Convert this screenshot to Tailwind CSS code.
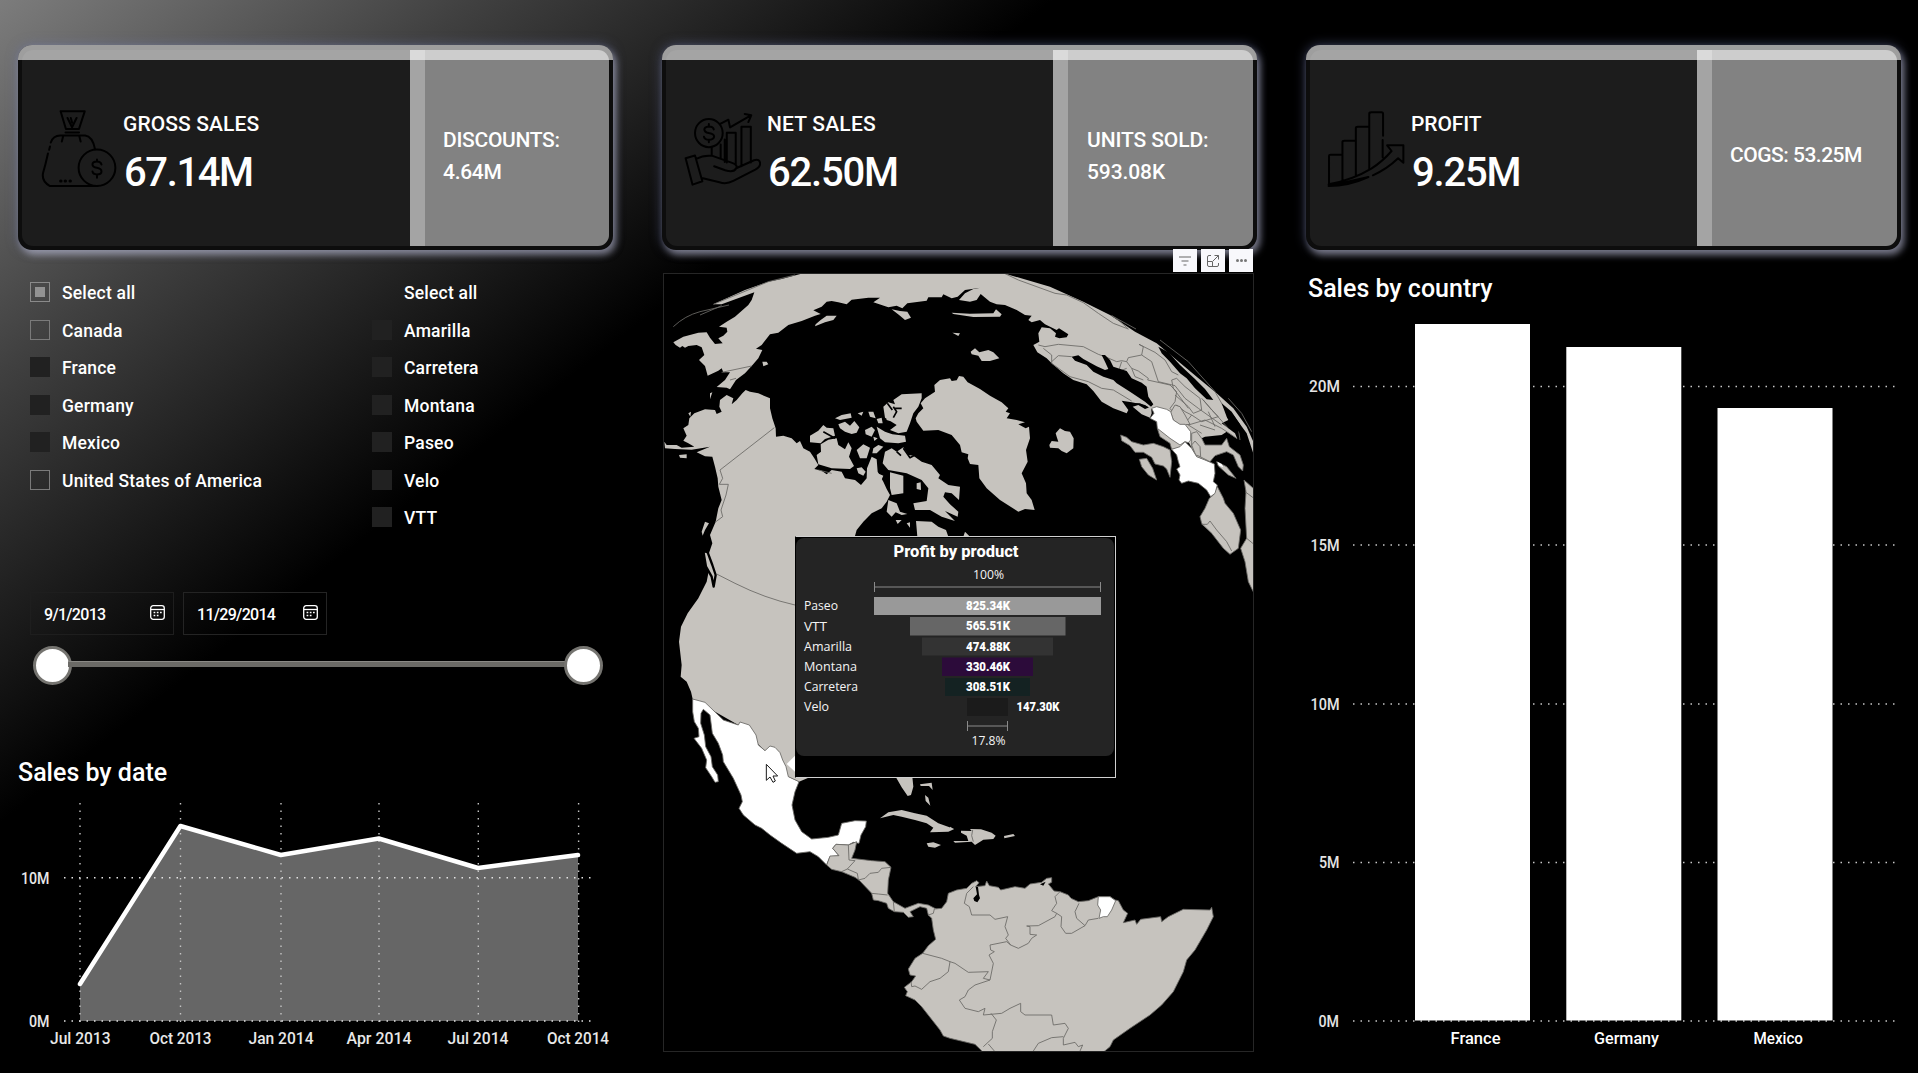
<!DOCTYPE html>
<html lang="en">
<head>
<meta charset="utf-8">
<title>Sales dashboard</title>
<script src="https://cdn.jsdelivr.net/npm/@tailwindcss/browser@4"></script>
</head>
<body class="bg-black">
<main class="w-[1918px] h-[1073px] overflow-hidden pt-[45px] pl-[18px] grid grid-cols-[595px_595px_595px] grid-rows-[205px_823px] gap-x-[49px] text-white font-['Roboto',sans-serif] bg-[linear-gradient(142deg,#7c7c7c_0%,#404040_14.5%,#000_32%)]">

  <!-- KPI cards -->
  <section class="relative rounded-[14px] overflow-visible bg-[#0d0d0d] pt-[5px] px-1 pb-1 shadow-[3px_5px_7px_rgba(205,205,225,0.5),0_0_12px_rgba(110,120,175,0.5)]">
    <div class="flex h-full rounded-[11px] overflow-hidden bg-[#1c1c1c]">
      <div class="flex w-[388px] pl-[19px]">
        <svg class="w-[76px] h-[78px] mt-[60px]" viewBox="100 240 186 235" preserveAspectRatio="none" fill="none" stroke="#000" stroke-width="2" stroke-linecap="round" stroke-linejoin="round">
          <g>
            <path vector-effect="non-scaling-stroke" d="M148 244H207L193 297H161ZM165 264L176 292L187 264M173 264L176 278M160 308H193M151 335L154 320M197 335L194 320M124 338Q130 317 147 317H208Q226 320 232 357M122 350L120 360M117 371Q111 405 105 430Q101 455 122 469H238"/>
            <ellipse vector-effect="non-scaling-stroke" cx="237" cy="414" rx="45" ry="55"/>
            <path vector-effect="non-scaling-stroke" d="M248 404Q246 395 237 395Q226 395 226 404Q226 412 237 414Q248 417 248 425Q248 434 237 434Q227 434 226 425M237 389V395M237 434V444"/>
            <path vector-effect="non-scaling-stroke" stroke-width="3" d="M148 454H149M159 454H160M171 454H172"/>
          </g>
        </svg>
        <div class="pt-[62px] pl-[6px]">
          <h2 class="text-[21px] leading-6 font-medium tracking-[0.1px] whitespace-nowrap">GROSS SALES</h2>
          <p class="mt-[13px] ml-px text-[40px] leading-[48px] font-medium tracking-[-1.4px]">67.14M</p>
        </div>
      </div>
      <div class="w-[15px] bg-[#a4a4a4]"></div>
      <div class="flex-1 flex items-center bg-[#828282] pl-[18px] pt-4">
        <p class="text-[21px] leading-8 font-medium tracking-[-0.3px]">DISCOUNTS:<br>4.64M</p>
      </div>
    </div>
    <div class="absolute inset-x-0 top-0 h-[15px] rounded-t-[14px] bg-white/60"></div>
  </section>

  <section class="relative rounded-[14px] bg-[#0d0d0d] pt-[5px] px-1 pb-1 shadow-[3px_5px_7px_rgba(205,205,225,0.5),0_0_12px_rgba(110,120,175,0.5)]">
    <div class="flex h-full rounded-[11px] overflow-hidden bg-[#1c1c1c]">
      <div class="flex w-[387px] pl-[18px]">
        <svg class="w-[77px] h-[75px] mt-[62px]" viewBox="107 246 189 224" preserveAspectRatio="none" fill="none" stroke="#000" stroke-width="2" stroke-linecap="round" stroke-linejoin="round">
          <ellipse vector-effect="non-scaling-stroke" cx="168" cy="309" rx="34" ry="42"/>
          <path vector-effect="non-scaling-stroke" d="M180 298Q179 289 168 289Q157 290 157 298Q157 306 168 309Q181 312 181 320Q179 329 168 329Q158 329 156 320M168 282V289M168 329V336M197 281L216 269L220 292L271 256M256 252L272 256L265 276M175 352V373M197 343V385M207 328V395M212 397V308H234V402M248 408V290H271V397M111 384L134 376L152 453L128 463ZM137 386Q155 374 177 377L225 398Q240 405 235 414Q230 428 208 420L181 408M235 414L279 390Q293 385 294 400Q294 410 282 418L228 452Q211 463 194 456Q170 448 151 443"/>
        </svg>
        <div class="pt-[62px] pl-[6px]">
          <h2 class="text-[21px] leading-6 font-medium tracking-[0.2px] whitespace-nowrap">NET SALES</h2>
          <p class="mt-[13px] ml-px text-[40px] leading-[48px] font-medium tracking-[-1.2px]">62.50M</p>
        </div>
      </div>
      <div class="w-[15px] bg-[#a4a4a4]"></div>
      <div class="flex-1 flex items-center bg-[#828282] pl-[19px] pt-4">
        <p class="text-[21px] leading-8 font-medium tracking-[-0.1px] whitespace-nowrap">UNITS SOLD:<br>593.08K</p>
      </div>
    </div>
    <div class="absolute inset-x-0 top-0 h-[15px] rounded-t-[14px] bg-white/60"></div>
  </section>

  <section class="relative rounded-[14px] bg-[#0d0d0d] pt-[5px] px-1 pb-1 shadow-[3px_5px_7px_rgba(205,205,225,0.5),0_0_12px_rgba(110,120,175,0.5)]">
    <div class="flex h-full rounded-[11px] overflow-hidden bg-[#1c1c1c]">
      <div class="flex w-[387px] pl-[17px]">
        <svg class="w-[78px] h-[77px] mt-[61px]" viewBox="117 243 192 231" preserveAspectRatio="none" fill="none" stroke="#000" stroke-width="2" stroke-linecap="round" stroke-linejoin="round">
          <path vector-effect="non-scaling-stroke" d="M122 461V377Q122 374 126 374H155M155 452V336Q155 332 160 332H188M188 438V294Q188 290 193 290H221M221 418V251Q221 247 226 247H251Q255 247 255 252V317M254 330V382M121 463Q180 450 226 416Q254 394 276 363L265 346H305V398L292 385Q265 417 230 436M219 441Q170 468 121 468Z"/>
        </svg>
        <div class="pt-[62px] pl-[6px]">
          <h2 class="text-[21px] leading-6 font-medium tracking-[-0.1px]">PROFIT</h2>
          <p class="mt-[13px] ml-px text-[40px] leading-[48px] font-medium tracking-[-1.2px]">9.25M</p>
        </div>
      </div>
      <div class="w-[15px] bg-[#a4a4a4]"></div>
      <div class="flex-1 flex items-center bg-[#828282] pl-[18px] pt-[13px]">
        <p class="text-[21px] leading-8 font-medium tracking-[-0.5px] whitespace-nowrap">COGS: 53.25M</p>
      </div>
    </div>
    <div class="absolute inset-x-0 top-0 h-[15px] rounded-t-[14px] bg-white/60"></div>
  </section>

  <!-- Filters and area chart -->
  <section class="pt-8">
    <div class="grid grid-cols-[342px_1fr] h-[310px] pl-3 text-[17.5px] leading-5 font-medium tracking-[0.2px]">
      <ul>
        <li class="flex gap-3 h-[37.5px]"><span class="size-5 border border-[#8a8a8a] flex items-center justify-center"><i class="size-[10px] bg-[#929292]"></i></span><span class="pt-px">Select all</span></li>
        <li class="flex gap-3 h-[37.5px]"><span class="size-5 border border-[#7a7a7a]"></span><span class="pt-px">Canada</span></li>
        <li class="flex gap-3 h-[37.5px]"><span class="size-5 bg-[#212121]"></span><span class="pt-px">France</span></li>
        <li class="flex gap-3 h-[37.5px]"><span class="size-5 bg-[#212121]"></span><span class="pt-px">Germany</span></li>
        <li class="flex gap-3 h-[37.5px]"><span class="size-5 bg-[#212121]"></span><span class="pt-px">Mexico</span></li>
        <li class="flex gap-3 h-[37.5px]"><span class="size-5 border border-[#7a7a7a]"></span><span class="pt-px">United States of America</span></li>
      </ul>
      <ul>
        <li class="flex gap-3 h-[37.5px]"><span class="size-5"></span><span class="pt-px">Select all</span></li>
        <li class="flex gap-3 h-[37.5px]"><span class="size-5 bg-[#212121]"></span><span class="pt-px">Amarilla</span></li>
        <li class="flex gap-3 h-[37.5px]"><span class="size-5 bg-[#212121]"></span><span class="pt-px">Carretera</span></li>
        <li class="flex gap-3 h-[37.5px]"><span class="size-5 bg-[#212121]"></span><span class="pt-px">Montana</span></li>
        <li class="flex gap-3 h-[37.5px]"><span class="size-5 bg-[#212121]"></span><span class="pt-px">Paseo</span></li>
        <li class="flex gap-3 h-[37.5px]"><span class="size-5 bg-[#212121]"></span><span class="pt-px">Velo</span></li>
        <li class="flex gap-3 h-[37.5px]"><span class="size-5 bg-[#212121]"></span><span class="pt-px">VTT</span></li>
      </ul>
    </div>
    <div class="flex gap-[9px] pl-[12px] text-base leading-5 font-medium tracking-[-0.7px]">
      <div class="flex w-[144px] h-[43px] border border-[#1e1e1e] pt-[11px] pl-[13px] pr-2 justify-between">
        <span class="pt-px">9/1/2013</span>
        <svg class="w-[15px] h-[15px] mt-px" viewBox="0 0 15 15" fill="none" stroke="#fff" stroke-width="1.3"><rect x=".7" y=".7" width="13.6" height="13.6" rx="2.5"/><path d="M1 4.5H14"/><path stroke-width="1.7" stroke-dasharray="1.7 1.5" d="M3.6 7.5H12M3.6 10.5H8.5"/></svg>
      </div>
      <div class="flex w-[144px] h-[43px] border border-[#242424] pt-[11px] pl-[13px] pr-2 justify-between">
        <span class="pt-px">11/29/2014</span>
        <svg class="w-[15px] h-[15px] mt-px" viewBox="0 0 15 15" fill="none" stroke="#fff" stroke-width="1.3"><rect x=".7" y=".7" width="13.6" height="13.6" rx="2.5"/><path d="M1 4.5H14"/><path stroke-width="1.7" stroke-dasharray="1.7 1.5" d="M3.6 7.5H12M3.6 10.5H8.5"/></svg>
      </div>
    </div>
    <div class="flex items-center mt-[10px] ml-[14.5px] h-10 w-[570px]">
      <span class="size-[39px] rounded-full bg-white border-[3px] border-[#757470] shrink-0"></span>
      <span class="h-[6px] flex-1 -mx-1 -mt-[3px] bg-[#6b6a66] border-t border-[#8b8a86]"></span>
      <span class="size-[39px] rounded-full bg-white border-[3px] border-[#757470] shrink-0"></span>
    </div>
    <h2 class="mt-[70px] h-[35px] text-[25px] leading-9 font-medium whitespace-nowrap">Sales by date</h2>
    <svg class="block w-[595px] h-[265px]" viewBox="18 790 595 265" font-size="16" font-weight="500" fill="#e8e8e8">
      <path d="M80 984L180.4 826L280.8 855L378.8 838.5L478 868L578 855V1021H80Z" fill="#666"/>
      <g stroke="#c4c4c4" stroke-width="1.4" stroke-dasharray="1.5 6">
        <path d="M80 803V1023M180.5 803V1023M281 803V1023M379 803V1023M478.3 803V1023M578.6 803V1023"/>
        <path stroke="#e4e4e4" d="M64 877.7H592M64 1021H592"/>
      </g>
      <path d="M80 984L180.4 826L280.8 855L378.8 838.5L478 868L578 855" fill="none" stroke="#fff" stroke-width="4.5" stroke-linejoin="round" stroke-linecap="round"/>
      <text x="21" y="884" textLength="28.5" lengthAdjust="spacingAndGlyphs">10M</text>
      <text x="29" y="1026.5" textLength="20.5" lengthAdjust="spacingAndGlyphs">0M</text>
      <text x="50" y="1044" textLength="60.5" lengthAdjust="spacingAndGlyphs">Jul 2013</text>
      <text x="149.500" y="1044" textLength="62" lengthAdjust="spacingAndGlyphs">Oct 2013</text>
      <text x="248.500" y="1044" textLength="65" lengthAdjust="spacingAndGlyphs">Jan 2014</text>
      <text x="346.500" y="1044" textLength="65" lengthAdjust="spacingAndGlyphs">Apr 2014</text>
      <text x="447.500" y="1044" textLength="61" lengthAdjust="spacingAndGlyphs">Jul 2014</text>
      <text x="547" y="1044" textLength="62" lengthAdjust="spacingAndGlyphs">Oct 2014</text>
    </svg>
  </section>

  <!-- Globe map with visual header and tooltip -->
  <section class="relative pt-[23px]">
    <div class="absolute top-[-1px] right-[4px] flex gap-1">
      <span class="w-6 h-[23px] bg-[#f8f8fc] flex items-center justify-center"><svg class="w-3 h-[10px]" viewBox="0 0 12 10" stroke="#666" fill="none"><path d="M0 1H12M2.500 5H9.500M4.500 9H7.500"/></svg></span>
      <span class="w-6 h-[23px] bg-[#f8f8fc] flex items-center justify-center"><svg class="size-[14px]" viewBox="0 0 14 14" stroke="#666" fill="none"><path d="M5 1.500H3Q1.500 1.500 1.500 3V11Q1.500 12.500 3 12.500H11Q12.500 12.500 12.500 11V9M1.500 7.500H6.500V12.500M7 7L12.500 1.500M8.500 1.500H12.500V5.500"/></svg></span>
      <span class="w-6 h-[23px] bg-[#f8f8fc] flex items-center justify-center gap-px"><i class="size-[3px] rounded-full bg-[#777]"></i><i class="size-[3px] rounded-full bg-[#777]"></i><i class="size-[3px] rounded-full bg-[#777]"></i></span>
    </div>
    <svg class="block ml-px w-[591px] h-[779px] border border-[#262626] bg-black" viewBox="27 27 1767 2331" preserveAspectRatio="none" fill="#c6c3be" stroke="#6b6966" stroke-width="2.600" stroke-linejoin="round">
      <!-- Asia and northern Europe -->
      <path stroke="none" d="M440 26L380 42L340 50L270 75L175 118L200 118L298 82L290 105L280 120L240 155L215 170L192 185L215 188L217 200L205 212L190 220L203 235L180 237L165 218L155 202L130 203L85 215L55 232L62 240L75 248L82 243L90 248L100 243L125 240L140 247L148 270L132 285L150 303L158 332L190 317L200 310L205 322L225 322L210 345L185 366L215 368L225 373L243 345L270 325L290 303L310 280L322 255L303 251L320 240L345 208L370 203L400 180L440 168L480 152L497 147L475 136L500 125L515 110L530 108L550 112L575 118L590 104L640 98L675 98L655 112L700 127L725 122L742 130L757 115L815 107L820 97L860 97L865 88L890 100L908 95L930 75L977 68L955 72L930 85L912 105L945 110L965 105L977 87L1005 110L1025 118L1050 120L1085 135L1110 150L1130 152L1120 165L1130 172L1155 165L1170 178L1205 195L1212 190L1240 208L1235 217L1213 220L1200 215L1203 205L1185 190L1160 187L1150 205L1153 230L1135 240L1147 262L1175 280L1190 295L1225 325L1255 345L1295 358L1315 378L1340 410L1375 430L1415 445L1420 435L1400 407L1430 412L1470 420L1488 432L1507 440L1600 530L1625 575L1650 585L1665 590L1640 520L1650 515L1700 510L1715 500L1747 522L1740 505L1700 475L1720 465L1715 455L1735 450L1775 505L1797 572L1797 535L1775 485L1735 430L1685 385L1625 335L1565 285L1505 235L1440 200L1365 150L1285 110L1185 65L1050 26Z"/>
      <path fill="none" d="M55 185Q90 152 135 140L222 120M135 150L200 122M200 322L290 303M225 345L243 340M175 118L340 50L420 30M1050 26L1090 45L1200 85L1235 90L1285 113L1330 145L1375 175L1420 192L1390 165L1370 152L1443 192"/>
      <path fill="none" d="M1150 240L1170 245L1210 238L1285 245L1330 268L1350 275L1385 290L1400 287L1415 290L1420 278L1460 270L1465 245L1452 238L1500 262L1530 285L1550 320L1570 330M1460 270L1490 290L1510 350L1560 362L1590 400L1630 430L1700 480M1165 250L1190 270L1190 295M1190 290L1210 272L1250 275M1190 295L1245 335L1300 350L1340 370L1375 375L1430 408M1400 290L1390 320L1415 310M1415 290L1430 310L1450 318L1480 340L1478 345L1545 360L1565 380L1560 410L1545 430L1560 450L1590 460L1600 480L1640 505M1430 310L1440 335L1465 345M1550 345L1565 340L1590 365L1635 400L1640 435L1615 445L1600 425L1560 390M1550 345L1555 370L1600 430M1645 405L1670 435L1690 455L1640 470L1610 450M1565 420L1590 440L1610 450L1590 475L1570 470M1600 480L1650 465L1700 490L1745 520M1635 480L1680 495M1640 400L1720 490M1660 440L1680 485M1515 225L1600 290L1680 380L1720 450M1750 490L1755 525M1720 400L1760 445L1790 500"/>
      <g fill="#000" stroke="none">
        <path d="M1250 275L1270 271L1285 282L1325 304L1350 315L1360 312L1350 290L1340 270L1350 270L1365 285L1375 305L1415 318L1430 340L1460 353L1475 365L1480 395L1495 418L1488 425L1470 410L1425 380L1385 355L1375 345L1345 335L1315 320L1295 300L1260 287Z"/>
        <path d="M1510 245L1540 262L1575 300L1620 342L1650 372L1675 405L1655 403L1620 370L1595 340L1575 325L1545 290L1520 265Z"/>
        <path d="M1580 312L1560 295L1540 270L1555 280L1577 318Z"/>
        <path d="M1700 415L1730 440L1755 478L1770 525L1745 492L1715 455Z"/>
        <path d="M1478 425L1455 415L1430 415L1440 428L1460 450L1485 458Z"/>
      </g>
      <path stroke="none" d="M1433 425L1450 420L1470 432L1488 425L1490 445L1485 458L1460 448Z"/>
      <!-- Western Europe -->
      <path d="M1610 505L1625 500L1640 520L1650 540L1700 540L1715 520L1723 545L1755 570L1765 600L1763 618L1750 605L1735 570L1715 560L1680 572L1665 590L1635 575L1610 550Z"/>
      <path d="M1507 490L1530 500L1560 520L1590 540L1575 548L1550 553L1545 535L1515 515Z"/>
      <path d="M1547 442L1560 420L1575 425L1590 450L1605 478L1575 480L1555 465Z"/>
      <path d="M1610 540L1620 528L1635 545L1637 575L1622 570Z"/>
      <path d="M1397 510L1415 517L1430 530L1465 540L1495 535L1525 545L1545 555L1550 590L1545 637L1535 612L1525 603L1500 597L1490 577L1465 562L1440 562L1425 542L1400 527ZM1453 583L1475 580L1493 610L1505 645L1480 630L1460 605Z"/>
      <path d="M1687 665L1705 700L1710 715L1735 745L1757 795L1750 850L1725 868L1705 850L1670 805L1640 775L1635 755L1650 730L1663 700L1675 690ZM1640 778L1657 778L1665 768L1685 795L1715 830L1730 858M1767 645L1797 672V985L1780 950L1770 890L1757 850L1775 820L1770 730L1773 680ZM1770 680L1797 700M1775 820L1797 838M1685 590L1715 605L1743 640L1720 630L1690 603Z"/>
      <g fill="#fff">
        <path d="M1490 430L1505 425L1535 433L1547 440L1555 465L1575 478L1590 478L1607 500V525L1600 533L1590 530L1575 540L1545 520L1507 490L1505 470L1485 460L1497 445Z"/>
        <path d="M1550 553L1575 545L1590 530L1610 550L1625 575L1650 585L1678 597L1680 625L1675 650L1687 660L1680 685L1667 695L1655 675L1630 655L1600 648L1580 655L1572 645L1575 630L1565 612L1575 605L1570 590L1565 570Z"/>
        <path stroke="none" d="M1687 590L1700 597L1705 607L1692 602Z"/>
      </g>
      <g stroke="none">
        <!-- Greenland and Iceland -->
        <path d="M782 460L790 445L805 430L797 415L810 400L840 380L838 360L855 345L885 340L890 348L905 346L912 333L925 335L938 352L975 372L1005 392L1040 412L1060 430L1052 440L1065 445L1055 460L1085 465L1110 472L1090 478L1112 490L1122 485L1125 520L1113 555L1118 590L1100 625L1113 655L1115 685L1130 705L1139 735L1110 732L1090 740L1035 705L995 670L973 640L970 600L945 597L938 580L940 568L920 562L915 540L890 510L850 495L805 497L785 470Z"/>
        <path d="M1183 540L1190 528L1210 530L1205 515L1202 505L1215 490L1230 498L1245 500L1256 520L1255 550L1235 565L1220 558L1210 550L1185 548Z"/>
        <path d="M947 260L960 250L973 262L1000 255L1015 262L1033 280L1005 288L980 288L970 272L950 268ZM890 143L945 146L1015 145L1023 133L1040 148L1035 155L955 156L895 147ZM892 203L915 205L910 213ZM497 165L515 152L545 152L535 165L510 172L480 184L482 178ZM710 133L735 138L757 140L768 158L750 165L735 152ZM322 290L335 290L340 298L325 304Z"/>
        <!-- Arctic archipelago -->
        <path d="M465 512L490 497L505 480L515 488L535 490L540 512L510 522L497 535L465 532ZM497 538L520 524L545 520L550 540L570 553L580 532L590 550L582 575L597 603L585 612L530 610L490 598L485 570L498 560ZM540 460L560 450L587 445L590 458L555 465ZM550 478L570 470L585 482L598 468L613 487L605 503L590 507L570 500L555 490ZM608 445L625 440L620 452ZM640 440L655 440L662 460L645 455ZM665 462L680 458L683 475L670 475ZM630 495L650 485L660 495L650 515L632 508ZM665 485L690 500L712 508L750 512L753 530L730 535L690 532L675 520ZM655 515L668 520L658 528ZM605 555L625 538L645 548L635 580L615 580ZM655 550L670 540L685 545L665 565L652 565ZM605 610L620 607L632 620L625 632L610 625Z"/>
        <path d="M685 425L700 412L720 418L715 405L740 388L800 385L800 400L790 425L775 445L765 475L755 500L730 505L705 495L725 480L690 458ZM690 440L705 450L712 470L695 465Z"/>
        <path d="M690 560L710 550L725 560L745 547L760 570L775 572L800 590L830 600L855 630L850 640L880 660L915 665L912 705L890 685L870 682L865 695L885 718L910 740L908 755L870 738L900 768L860 755L825 735L780 735L775 715L815 708L820 670L800 645L755 625L700 615L683 595ZM785 655L797 652L798 675L785 672ZM705 622L745 632L745 685L710 690L705 670ZM700 705L725 715L735 740L757 747L740 750L722 742L710 755L695 740ZM722 765L740 765L728 777ZM755 775L765 772L765 788ZM668 625L685 632L678 648Z"/>
        <path d="M783 768L830 770L850 785L873 795L880 815H787ZM925 815L930 800L945 815Z"/>
      </g>
      <path fill="none" stroke="#000" stroke-width="5" d="M715 425L725 440L715 458M720 430L740 430M697 415L712 435M505 500L540 520M725 560L738 572M745 550L765 578L780 570M520 470L545 470"/>
      <!-- North America -->
      <path d="M28 530L35 540L65 540L80 548L118 545L100 535L85 527L95 512L85 490L100 480L103 460L118 445L150 433L180 435L185 447L200 440L193 425L195 405L215 390L235 400L230 418L245 405L262 385L272 375L285 380L310 385L345 400L345 430L352 460L362 490L363 515L385 512L410 520L425 535L435 528L445 550L465 560L478 580L490 600L478 612L500 617L515 628L530 615L560 620L570 640L600 645L618 660L635 640L636 610L650 575L665 583L668 620L685 650L695 672L705 690L695 710L680 730L650 745L625 770L605 795L598 820V1480L432 1550L400 1535L330 1457L250 1380L113 1302L108 1280L95 1250L77 1235L80 1200L72 1130L78 1085L98 1045L130 1000L155 950L160 925L172 900L160 870L172 835L165 810L182 770L190 730L200 705L190 665L188 640L180 605L172 575L150 574L125 562L165 545L110 554L60 552L30 550Z" stroke="none"/>
      <path stroke="none" d="M72 570L95 568L95 580L75 578ZM100 445L108 440L106 455ZM165 385L172 382L165 403ZM150 770L162 775L150 795L143 812L140 800Z"/>
      <path stroke="#000" stroke-width="7" d="M145 858L158 862L172 900L182 930L176 965L170 935L153 905Z"/>
      <path fill="none" d="M358 488L195 615L203 640L193 658H220L213 690L198 735L203 755L180 772M185 927L240 955Q330 1000 420 1020M490 615L530 625"/>
      <!-- Mexico -->
      <path fill="#fff" d="M113 1302L150 1312L205 1365L250 1380L255 1371L283 1380L303 1410L310 1440L330 1457L345 1443L360 1447L375 1463L383 1485L393 1505L400 1535L432 1550L420 1580L411 1620L420 1665L440 1700L470 1722L520 1717L550 1710L560 1675L600 1667L634 1668L632 1685L618 1710L612 1735L595 1732L580 1740L543 1738L533 1750L552 1772L525 1775L515 1800L490 1775L465 1760L425 1765L380 1735L345 1710L320 1690L300 1680L265 1650L252 1630L262 1610L258 1590L235 1540L205 1490L203 1470L190 1435L172 1405L165 1350L145 1333L138 1345L137 1375L148 1410L152 1445L168 1475L172 1505L188 1530L190 1550L180 1552L170 1535L152 1508L155 1485L140 1450L117 1420L132 1415L130 1390L118 1370L113 1340Z"/>
      <path stroke="none" fill="#fff" d="M395 1497L420 1472V1520Z"/>
      <!-- Caribbean -->
      <path stroke="none" d="M722 1535H772L775 1565L768 1590L758 1593L740 1567ZM675 1660L700 1642L740 1635L780 1645L815 1652L850 1675L898 1692L880 1700L825 1702L835 1688L815 1675L780 1665L740 1655L715 1650ZM815 1735L835 1732L858 1740L840 1748L820 1745ZM795 1558L830 1553L833 1575L822 1563L797 1563ZM810 1590L820 1598L826 1622L812 1608ZM918 1697L950 1698L945 1692L978 1693L1010 1703L1022 1712L1015 1722L985 1724L960 1740L950 1730L900 1733L895 1728L940 1728L935 1712L918 1703ZM885 1685L897 1692L885 1697ZM1047 1713L1075 1707L1080 1713L1048 1720Z"/>
      <path fill="none" d="M953 1695L950 1712L955 1730"/>
      <!-- Central America -->
      <path d="M515 1800L525 1773L552 1772L533 1750L543 1738L580 1740L605 1730L600 1755L590 1780L650 1787L690 1790L708 1807L700 1845L698 1885L715 1910L750 1930L790 1915L820 1920L845 1933L835 1955L820 1950L815 1930L795 1925L765 1940L775 1955L760 1957L745 1942L718 1940L700 1930L695 1915L670 1907L655 1905L650 1885L612 1845L600 1837L560 1820L530 1813Z"/>
      <path fill="none" d="M580 1740L582 1785L600 1787L577 1812L560 1820M577 1812L607 1825L610 1843M610 1845L630 1840L645 1825L670 1822L680 1810L708 1807M650 1885L670 1887L698 1890M715 1910L718 1940"/>
      <!-- South America -->
      <path d="M838 1932L860 1930L875 1910L880 1885L905 1875L935 1870L950 1855L965 1847L972 1853L962 1865L990 1862L995 1848L1003 1862L1030 1867L1037 1875L1080 1865L1110 1870L1125 1857L1160 1852L1175 1840L1190 1838V1852L1180 1857L1197 1878L1215 1880L1240 1890L1248 1900L1270 1910L1300 1907L1330 1895H1365L1380 1905L1390 1907L1405 1935L1418 1945L1405 1973L1440 1965L1445 1978L1457 1963L1517 1955L1520 1970L1540 1955L1585 1933L1665 1935L1670 1927L1675 1955L1655 1995L1620 2055L1595 2085L1585 2120L1555 2180L1520 2220L1485 2250L1425 2290L1375 2325L1365 2345L1347 2360H983L960 2338L885 2320L865 2313L855 2295L800 2225L780 2205L752 2192L757 2180L748 2167L770 2150L782 2133L765 2130L760 2112L780 2080L803 2065L820 2042L842 2023L835 1995L830 1960L820 1950L835 1945Z"/>
      <path fill="#000" stroke="none" d="M962 1865L966 1888L955 1900L958 1908L967 1912L975 1900L972 1890L969 1866ZM1155 1858L1172 1850L1165 1862Z"/>
      <path fill="#fff" d="M1330 1895H1365L1382 1907L1370 1935L1357 1955L1345 1955L1332 1960L1337 1935L1328 1920Z"/>
      <path fill="none" d="M955 1865L935 1885L928 1915L943 1925L950 1950L1005 1950L1020 1963L1058 1955L1050 1985L1060 2010L1052 2020L1067 2040L1090 2050L1120 2035L1130 2020L1145 2010L1125 2008V1985L1115 1983L1150 1982L1200 1955L1205 1945L1190 1937L1205 1915L1200 1895L1215 1880M1067 2040L1055 2030L1005 2040L1007 2055L1018 2060L1002 2070L1015 2095L1005 2145L985 2140L1000 2120L940 2122L900 2095L885 2090L860 2080L803 2065M885 2090L880 2120L855 2140L825 2150L800 2173L780 2163L770 2165L768 2150M1205 1945L1220 1955L1218 1985L1232 2005L1250 2005L1290 1982L1265 1960L1260 1940L1272 1915M1290 1982L1300 1965L1330 1960M1005 2145L960 2160L940 2175L930 2195L913 2205L930 2230L970 2240L990 2230L985 2250L1040 2245L1065 2230L1097 2215V2240L1110 2250L1190 2250L1195 2280L1230 2275L1240 2290L1225 2320L1225 2340L1260 2332L1270 2345L1283 2340L1275 2358M1008 2245L1024 2265L1012 2300L1012 2320L985 2345M1000 2337L1018 2358M1135 2358L1150 2335L1190 2318L1225 2315"/>
      <!-- Mouse pointer -->
      <path fill="#fff" stroke="#1a1a1a" stroke-width="3" stroke-linejoin="miter" d="M334 1498V1546L345 1536L354 1552L361 1548L354 1533H368Z"/>
    </svg>

    <div class="absolute left-[133px] top-[286px] w-[321px] h-[242px] bg-black border border-[#d0d0d0] border-l-black pt-px">
      <svg class="block w-[318px] h-[219px]" viewBox="796 538 318 219" font-family="'Open Sans','Noto Sans',sans-serif" font-size="13" fill="#f4f4f4">
        <rect x="796" y="538" width="318" height="218" rx="8" fill="#242424"/>
        <text x="893.500" y="557" font-size="17" font-weight="800" font-family="Roboto" fill="#fff" textLength="125" lengthAdjust="spacingAndGlyphs">Profit by product</text>
        <text x="973" y="579" textLength="31" lengthAdjust="spacingAndGlyphs">100%</text>
        <path d="M874.500 582V592M1100.500 582V592M874.500 587H1100.500M967.500 721V731M1007.500 721V731M967.500 726H1007.500" stroke="#8a8a8a" fill="none"/>
        <rect x="874" y="597" width="227" height="18" fill="#999"/>
        <rect x="910" y="617" width="155.500" height="18.500" fill="#666"/>
        <rect x="922" y="637.500" width="131" height="18" fill="#333"/>
        <rect x="942" y="657.500" width="91" height="18.500" fill="#2c0b3a"/>
        <rect x="945" y="678" width="85" height="18" fill="#142222"/>
        <rect x="967" y="698" width="41" height="18" fill="#1b1b1b"/>
        <text x="804" y="610" textLength="34" lengthAdjust="spacingAndGlyphs">Paseo</text>
        <text x="804" y="630.500" textLength="23" lengthAdjust="spacingAndGlyphs">VTT</text>
        <text x="804" y="650.500" textLength="48" lengthAdjust="spacingAndGlyphs">Amarilla</text>
        <text x="804" y="671" textLength="53" lengthAdjust="spacingAndGlyphs">Montana</text>
        <text x="804" y="691" textLength="54" lengthAdjust="spacingAndGlyphs">Carretera</text>
        <text x="804" y="711" textLength="25" lengthAdjust="spacingAndGlyphs">Velo</text>
        <text x="971.500" y="745" textLength="34" lengthAdjust="spacingAndGlyphs">17.8%</text>
        <g font-family="Roboto" font-weight="900" font-size="13.500" fill="#fff">
          <text x="966" y="609.500" textLength="44" lengthAdjust="spacingAndGlyphs">825.34K</text>
          <text x="966" y="629.500" textLength="44" lengthAdjust="spacingAndGlyphs">565.51K</text>
          <text x="966" y="650.500" textLength="44" lengthAdjust="spacingAndGlyphs">474.88K</text>
          <text x="966" y="670.500" textLength="44" lengthAdjust="spacingAndGlyphs">330.46K</text>
          <text x="966" y="690.500" textLength="44" lengthAdjust="spacingAndGlyphs">308.51K</text>
          <text x="1016.500" y="710.500" textLength="43" lengthAdjust="spacingAndGlyphs">147.30K</text>
        </g>
      </svg>
    </div>
  </section>

  <!-- Column chart -->
  <section class="pt-[21px]">
    <h2 class="h-[44px] pl-[2px] text-[25px] leading-9 font-medium whitespace-nowrap">Sales by country</h2>
    <svg class="block w-[595px] h-[740px]" viewBox="1306 315 595 740" font-size="16" font-weight="500" fill="#e4e4e4">
      <path d="M1353 386.500H1897M1353 545H1897M1353 704H1897M1353 862.500H1897M1353 1021H1897" fill="none" stroke="#c8c8c8" stroke-width="1.500" stroke-dasharray="1.500 6"/>
      <g fill="#fff">
        <rect x="1415" y="324" width="115" height="696.500"/>
        <rect x="1566.300" y="347" width="115" height="673.500"/>
        <rect x="1717.500" y="408" width="115" height="612.500"/>
      </g>
      <text x="1309" y="392" textLength="31" lengthAdjust="spacingAndGlyphs">20M</text>
      <text x="1310.500" y="550.500" textLength="29" lengthAdjust="spacingAndGlyphs">15M</text>
      <text x="1310.500" y="709.500" textLength="29" lengthAdjust="spacingAndGlyphs">10M</text>
      <text x="1319" y="868" textLength="20.500" lengthAdjust="spacingAndGlyphs">5M</text>
      <text x="1318.500" y="1026.500" textLength="20.500" lengthAdjust="spacingAndGlyphs">0M</text>
      <g fill="#fff">
        <text x="1450.500" y="1044" textLength="50" lengthAdjust="spacingAndGlyphs">France</text>
        <text x="1594" y="1044" textLength="65" lengthAdjust="spacingAndGlyphs">Germany</text>
        <text x="1753.500" y="1044" textLength="49.500" lengthAdjust="spacingAndGlyphs">Mexico</text>
      </g>
    </svg>
  </section>
</main>
</body>
</html>
